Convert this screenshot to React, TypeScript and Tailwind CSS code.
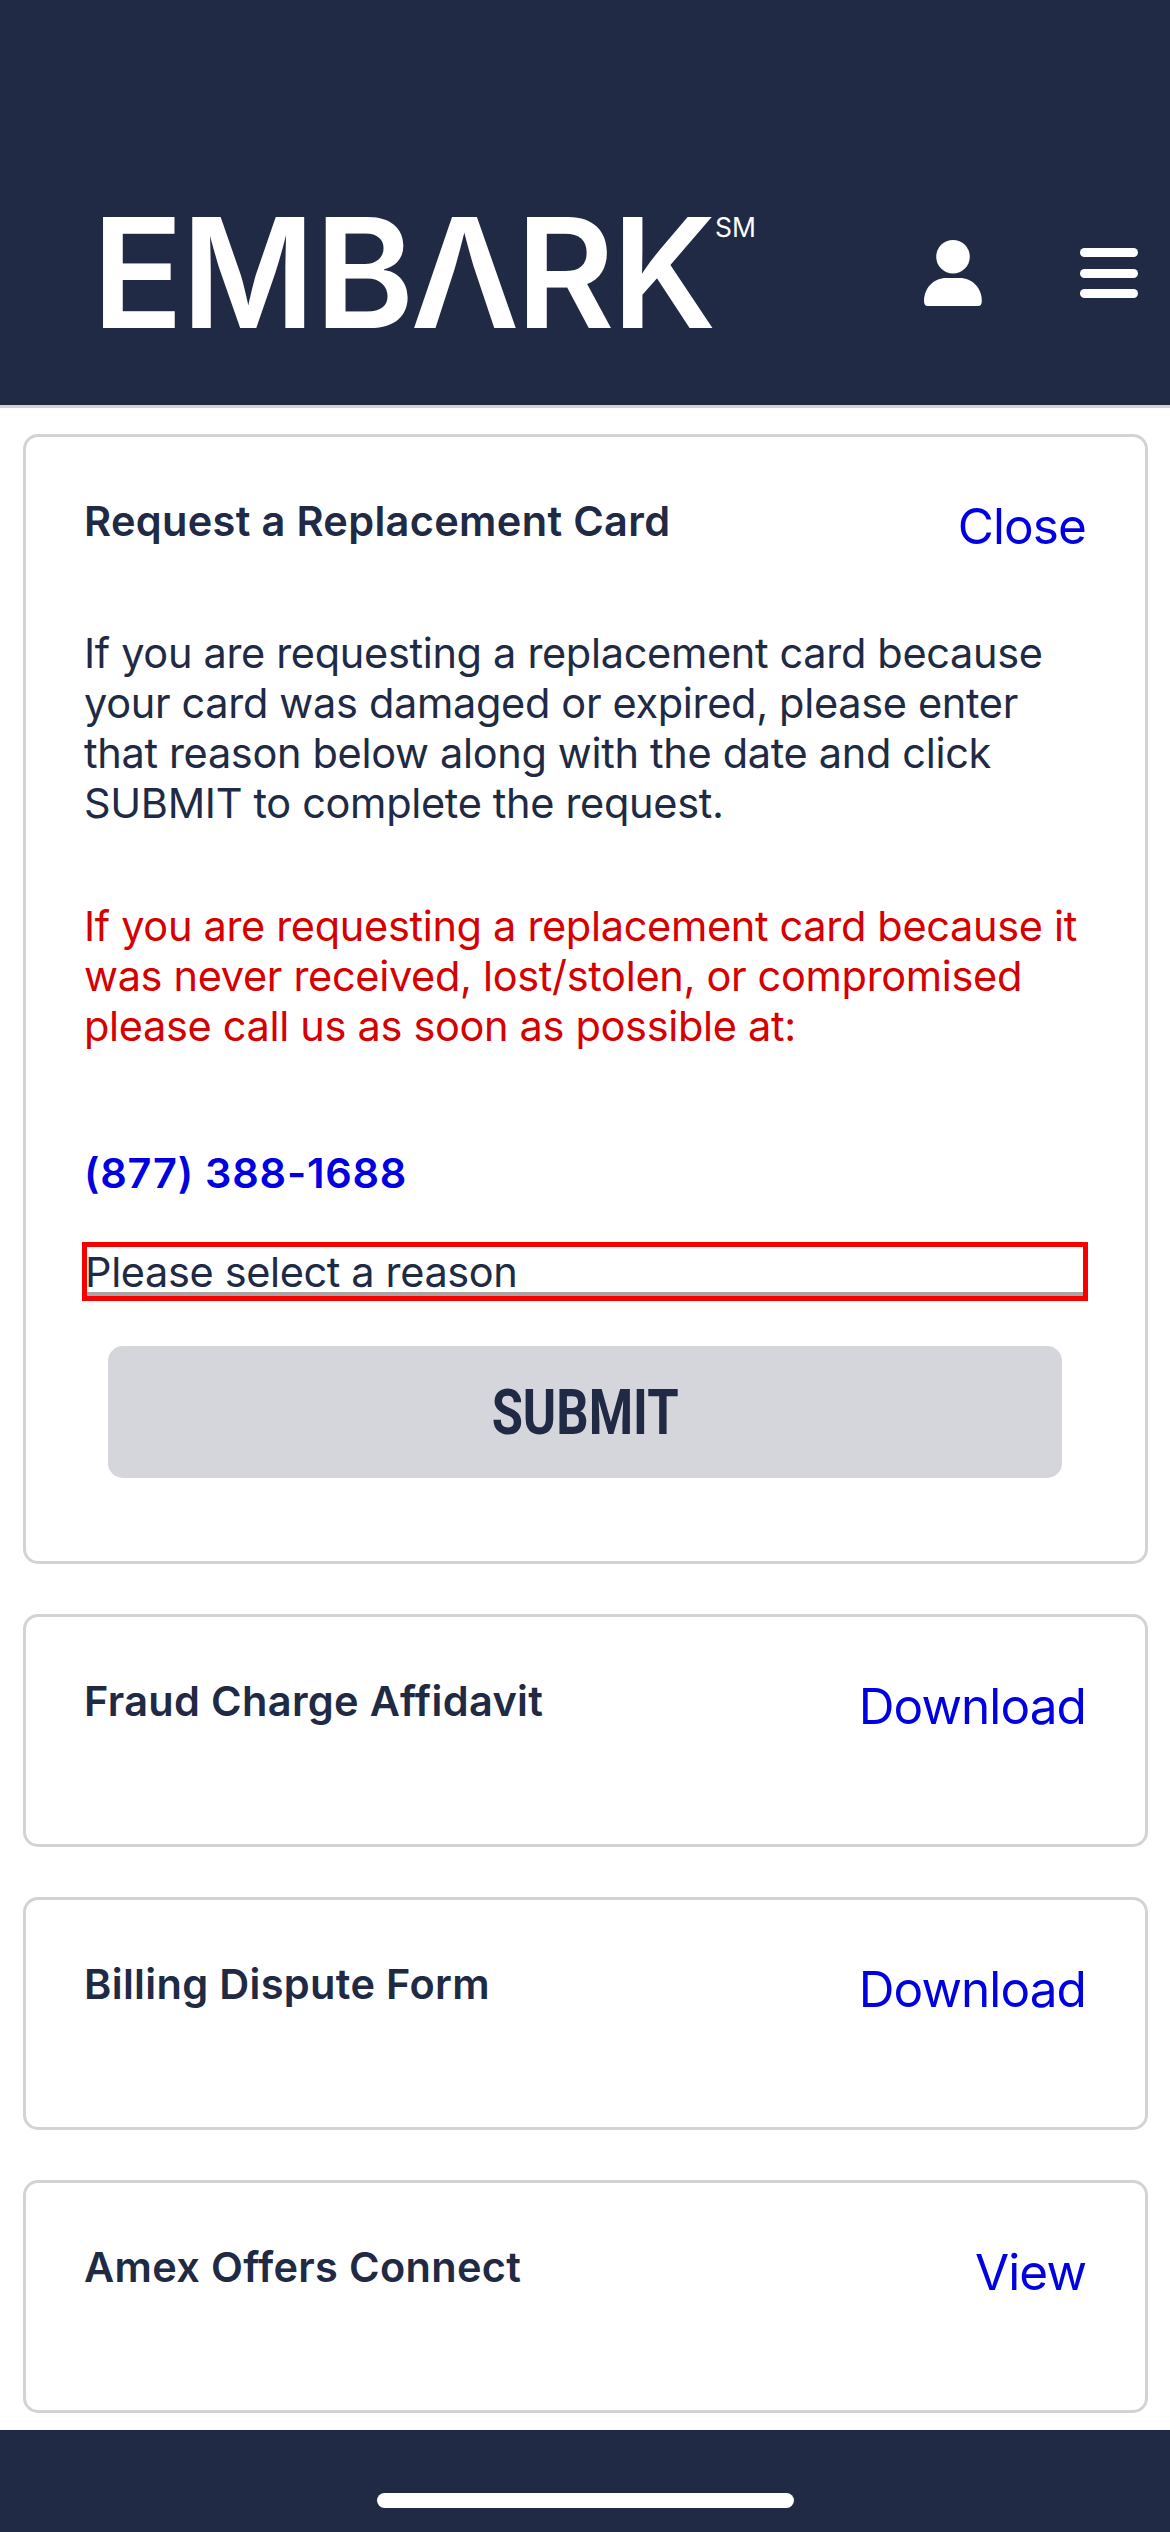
import React from "react";

const letters = [
  { char: "E", x: 92, scale: 0.99 },
  { char: "M", x: 181.8, scale: 0.945 },
  { char: "B", x: 314.7, scale: 0.99 },
  { char: "Λ", x: 410.5, scale: 0.98 },
  { char: "R", x: 516, scale: 0.99 },
  { char: "K", x: 612.2, scale: 0.97 },
];

function Logo() {
  return (
    <svg className="mt-[150px] ml-[80px] overflow-visible" width="700" height="240" viewBox="80 150 700 240" fill="white" aria-label="EMBARK">
      {letters.map(({ char, x, scale }) => (
        <text key={char} transform={`translate(${x} 328) scale(${scale} 1)`} fontSize="152.5" fontWeight="600">
          {char}
        </text>
      ))}
      <text x="715" y="237" fontSize="26.5" fontWeight="400">SM</text>
    </svg>
  );
}

function Card({ title, action, className, children }: { title: string; action: string; className: string; children?: React.ReactNode }) {
  return (
    <section className={`mx-[22.5px] shrink-0 rounded-[15px] border-[3px] border-[#d3d3d3] px-[58.5px] ${className}`}>
      <div className="flex justify-between pt-[56px]">
        <h2 className="mt-[3px] text-[41.5px] leading-[50px] font-semibold whitespace-nowrap tracking-[0.33px]">{title}</h2>
        <a className="mt-[3px] h-[61px] text-[49.5px] leading-[60px] text-[#0000e0] tracking-[-0.9px]">{action}</a>
      </div>
      {children}
    </section>
  );
}

export default function App() {
  return (
    <div className="flex h-[2532px] w-[1170px] flex-col overflow-hidden bg-white font-['Inter',sans-serif] text-[#202a44]">
      <header className="flex h-[408px] shrink-0 items-start border-b-[3px] border-[#d0d3d8] bg-[#202a44] text-white">
        <Logo />
        <svg className="mt-[239px] ml-[143px]" width="60" height="68" viewBox="0 0 60 68" fill="white">
          <circle cx="30" cy="17.7" r="16.8" />
          <path d="M23.5 39h13C49.500 39 58.800 49 58.800 62q0 5-3.500 5H4.500Q1 67 1 62C1 49 10.500 39 23.500 39Z" />
        </svg>
        <div className="mt-[248px] ml-[97px] flex w-[58px] flex-col gap-[11.5px]">
          <span className="h-[9px] rounded-full bg-white" />
          <span className="h-[9px] rounded-full bg-white" />
          <span className="h-[9px] rounded-full bg-white" />
        </div>
      </header>
      <main className="flex flex-1 flex-col gap-[50.5px] pt-[25.5px]">
        <Card title="Request a Replacement Card" action="Close" className="h-[1130px]">
          <p className="mt-[71px] text-[41.5px] leading-[50px] tracking-[-0.33px] whitespace-nowrap">If you are requesting a replacement card because<br />your card was damaged or expired, please enter<br />that reason below along with the date and click<br />SUBMIT to complete the request.</p>
          <p className="mt-[73px] text-[41.5px] leading-[50px] tracking-[-0.33px] whitespace-nowrap text-[#d60000]">If you are requesting a replacement card because it<br />was never received, lost/stolen, or compromised<br />please call us as soon as possible at:</p>
          <p className="mt-[97px] text-[41.5px] leading-[50px] font-semibold tracking-[0.75px] text-[#0000e0]">(877) 388-1688</p>
          <div className="mx-[-2px] mt-[44px] h-[59px] border-[5px] border-[#f70000]">
            <div className="h-[49px] border-b-4 border-[#a6a6a6] text-[41.5px] leading-[51px] tracking-[-0.37px] whitespace-nowrap"><span className="-ml-[2px]">Please select a reason</span></div>
          </div>
          <button className="mx-6 mt-[45px] flex h-[132px] w-[954px] items-center justify-center rounded-[15px] bg-[#d5d6dc] pt-[3px]">
            <span className="inline-block scale-x-[0.805] font-['Roboto',sans-serif] text-[63px] font-bold">SUBMIT</span>
          </button>
        </Card>
        <Card title="Fraud Charge Affidavit" action="Download" className="h-[232.600px]" />
        <Card title="Billing Dispute Form" action="Download" className="h-[232.600px]" />
        <Card title="Amex Offers Connect" action="View" className="h-[232.600px]" />
      </main>
      <footer className="flex h-[102px] shrink-0 justify-center bg-[#202a44] pt-[63px]">
        <span className="h-[15px] w-[417px] rounded-full bg-white" />
      </footer>
    </div>
  );
}
